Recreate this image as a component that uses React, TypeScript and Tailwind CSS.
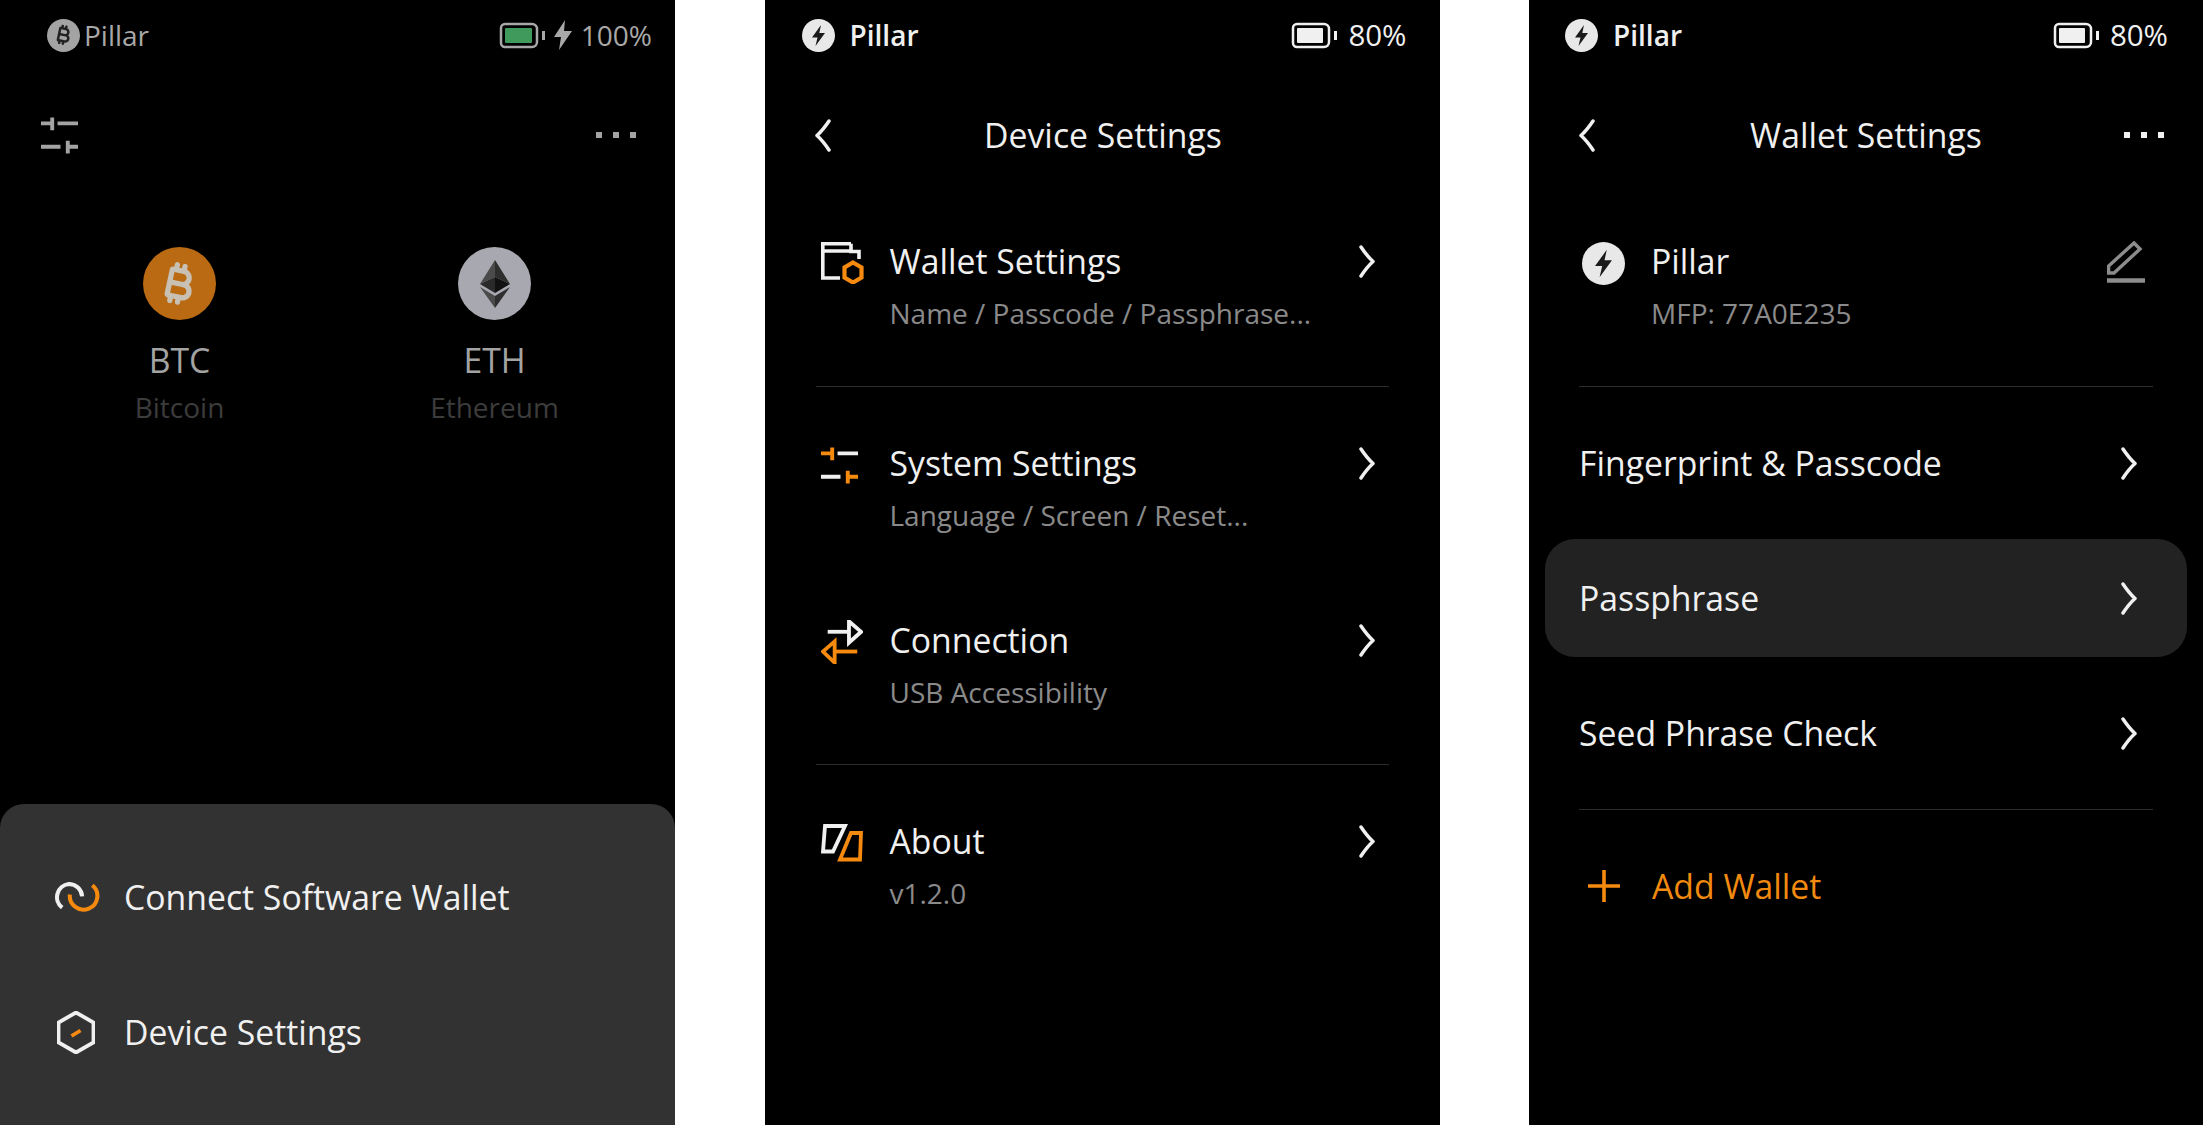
import type { FC, ReactNode } from 'react';
import { FaBitcoinSign } from 'react-icons/fa6';

const ORANGE = '#f68a0e';

const Battery: FC<{ stroke: string; fill: string; fillWidth: number }> = ({ stroke, fill, fillWidth }) => (
  <svg width="47" height="27" viewBox="0 0 47 27" fill="none">
    <path d="M6 2h27a5 5 0 0 1 5 5v13a5 5 0 0 1-5 5H6a4 4 0 0 1-4-4V6a4 4 0 0 1 4-4z" stroke={stroke} strokeWidth="2.5" />
    <rect x="6" y="6" width={fillWidth} height="15" rx="1" fill={fill} />
    <rect x="43" y="9" width="3" height="9" fill={stroke} />
  </svg>
);

const Bolt: FC<{ size: number }> = ({ size }) => (
  <svg width={size} height={size} viewBox="0 0 33 33">
    <circle cx="16.5" cy="16.5" r="16.5" fill="#e8e8e8" />
    <path d="M19 6 10 18.5h5.5L13.5 27 23 14h-5.7z" fill="#1a1a1a" />
  </svg>
);

const Chevron: FC = () => (
  <svg width="16" height="33" viewBox="0 0 16 33" fill="none">
    <path d="M2 2c4 6 7 10 12 14.5C9 21 6 25 2 31" stroke="#f0f0f0" strokeWidth="3.5" strokeLinecap="round" strokeLinejoin="round" />
  </svg>
);

const BackChevron: FC = () => (
  <svg width="16" height="33" viewBox="0 0 16 33" fill="none">
    <path d="M14 2C10 8 7 12 2 16.5 7 21 10 25 14 31" stroke="#f0f0f0" strokeWidth="3.5" strokeLinecap="round" strokeLinejoin="round" />
  </svg>
);

const Dots: FC<{ color: string }> = ({ color }) => (
  <div className={`flex gap-[11px] ${color}`}>
    <span className="w-[6px] h-[6px] bg-current" />
    <span className="w-[6px] h-[6px] bg-current" />
    <span className="w-[6px] h-[6px] bg-current" />
  </div>
);

const SlidersIcon: FC<{ a: string; b: string }> = ({ a, b }) => (
  <svg width="37" height="37" viewBox="0 0 38 37" fill="none" strokeWidth="4">
    <path d="M0 6h13M11.5 0v13" stroke={a} />
    <path d="M17 6h21M0 30h20" stroke={b} />
    <path d="M27 30h11M27.5 24v13" stroke={a} />
  </svg>
);

const WalletIcon: FC = () => (
  <svg width="44" height="42" viewBox="0 0 44 42" fill="none" strokeWidth="3.6">
    <path d="M2 9h28M30 1.8H1.8V36H19M30 1.8V9.5h8V17" stroke="#f0f0f0" />
    <path d="M32 20.5l8.5 5v10l-8.5 5-8.5-5v-10z" stroke={ORANGE} strokeWidth="4.2" />
  </svg>
);

const ConnectionIcon: FC = () => (
  <svg width="42" height="44" viewBox="-2 -1 44 46" fill="none" strokeWidth="4">
    <path d="M5 11.3h22" stroke="#f0f0f0" />
    <path d="M27.3.3 40 11.3 27.3 22.7z" stroke="#f0f0f0" />
    <path d="M36 32H13" stroke={ORANGE} />
    <path d="M12.3 21.3 0 32l12.3 11.7z" stroke={ORANGE} />
  </svg>
);

const AboutIcon: FC = () => (
  <svg width="43" height="38" viewBox="0 0 43 38" fill="none" strokeWidth="3.8">
    <path d="M4 2h20L12 27.5H2z" stroke="#f0f0f0" />
    <path d="M30 9h10l-1 26.5H19z" stroke={ORANGE} />
  </svg>
);

const ConnectIcon: FC = () => (
  <svg width="47" height="31" viewBox="0 0 46 30" fill="none" strokeWidth="4">
    <path d="M9 25A13 13 0 0 1 15.5 1.8 13 13 0 0 1 28.5 14" stroke="#f0f0f0" />
    <path d="M16.5 12A13.5 13.5 0 1 0 38.5 3" stroke={ORANGE} />
  </svg>
);

const DeviceIcon: FC = () => (
  <svg width="38" height="43" viewBox="0 0 38 43" fill="none">
    <path d="M19 1.5l17.5 10v20L19 41.5l-17.5-10v-20z" stroke="#f0f0f0" strokeWidth="3.8" />
    <path d="M14.5 25 23.5 19.5" stroke={ORANGE} strokeWidth="3.8" />
  </svg>
);

const PenIcon: FC = () => (
  <svg width="38" height="42" viewBox="0 0 38 42" fill="none" stroke="#8c8c8c">
    <path d="M27 2l6 6L7 32H1.6v-7z" strokeWidth="3.4" />
    <path d="M0 39.5h38" strokeWidth="4.5" />
  </svg>
);

const StatusBar: FC<{ level: string; pl: string; pr: string }> = ({ level, pl, pr }) => (
  <div className={`h-[70px] flex items-center justify-between ${pl} ${pr}`}>
    <div className="flex items-center gap-[15px]">
      <Bolt size={33} />
      <span className="text-[28px] font-semibold text-[#f0f0f0]">Pillar</span>
    </div>
    <div className="flex items-center gap-[10px]">
      <Battery stroke="#f0f0f0" fill="#f0f0f0" fillWidth={26} />
      <span className="text-[29.5px] text-[#f0f0f0]">{level}</span>
    </div>
  </div>
);

const SettingRow: FC<{ icon: ReactNode; title: string; sub: string }> = ({ icon, title, sub }) => (
  <div className="flex items-start pl-[56px] pr-[65px]">
    <div className="w-[69px] h-[52px] flex items-center shrink-0">{icon}</div>
    <div className="flex-1">
      <div className="text-[33.75px] leading-[48px] text-[#f0f0f0]">{title}</div>
      <div className="mt-[7px] text-[28px] leading-[42px] text-[#8a8a8a]">{sub}</div>
    </div>
    <div className="h-[48px] flex items-center"><Chevron /></div>
  </div>
);

const MenuRow: FC<{ title: string; active?: boolean }> = ({ title, active }) => (
  <div className={`mx-[16px] h-[118px] px-[34px] pr-[50px] flex items-center justify-between rounded-[30px] ${active ? 'bg-[#222222]' : ''}`}>
    <span className="text-[33.75px] text-[#f0f0f0]">{title}</span>
    <Chevron />
  </div>
);

const HomeScreen: FC = () => (
  <div className="w-[675px] h-full bg-black flex flex-col overflow-hidden">
    <div className="h-[70px] flex items-center justify-between pl-[47px] pr-[23px]">
      <div className="flex items-center gap-[4px]">
        <div className="w-[33px] h-[33px] rounded-full bg-[#a3a3a3] flex items-center justify-center">
          <FaBitcoinSign className="w-[14px] h-[20px] rotate-12 text-[#222222]" />
        </div>
        <span className="text-[28px] text-[#a8a8a8]">Pillar</span>
      </div>
      <div className="flex items-center">
        <Battery stroke="#a8a8a8" fill="#3f9a5c" fillWidth={27} />
        <svg className="ml-[8px]" width="18" height="30" viewBox="0 0 18 30">
          <path d="M11 0 0 17h7L5 30 18 11h-8z" fill="#a8a8a8" />
        </svg>
        <span className="ml-[9px] text-[28px] text-[#a8a8a8]">100%</span>
      </div>
    </div>
    <div className="h-[130px] flex items-center justify-between pl-[41px] pr-[39px]">
      <SlidersIcon a="#a3a3a3" b="#a3a3a3" />
      <Dots color="text-[#a3a3a3]" />
    </div>
    <div className="mt-[47px] pl-[22px] grid grid-cols-[315px_315px]">
      <div className="flex flex-col items-center">
        <div className="w-[73px] h-[73px] rounded-full bg-[#b96a12] flex items-center justify-center">
          <FaBitcoinSign className="w-[28px] h-[42px] rotate-12 text-[#c9c0b4]" />
        </div>
        <div className="mt-[16px] text-[33.75px] leading-[48px] text-[#a3a3a3]">BTC</div>
        <div className="mt-[2px] text-[28px] leading-[42px] text-[#3c3c3c]">Bitcoin</div>
      </div>
      <div className="flex flex-col items-center">
        <div className="w-[73px] h-[73px] rounded-full bg-[#a8a8b0] flex items-center justify-center">
          <svg width="30" height="48" viewBox="0 0 30 48">
            <path d="M15 0 0 24l15-7z" fill="#4a4a4a" />
            <path d="M15 0l15 24-15-7z" fill="#2e2e2e" />
            <path d="M0 24l15-7v16z" fill="#2a2a2a" />
            <path d="M30 24l-15-7v16z" fill="#111111" />
            <path d="M0 27l15 21V36z" fill="#4a4a4a" />
            <path d="M30 27 15 48V36z" fill="#2e2e2e" />
          </svg>
        </div>
        <div className="mt-[16px] text-[33.75px] leading-[48px] text-[#a3a3a3]">ETH</div>
        <div className="mt-[2px] text-[28px] leading-[42px] text-[#3c3c3c]">Ethereum</div>
      </div>
    </div>
    <div className="mt-auto h-[321px] pt-[26px] bg-[#323232] rounded-t-[24px]">
      <div className="h-[135px] flex items-center pl-[53px]">
        <div className="w-[71px] shrink-0"><ConnectIcon /></div>
        <span className="text-[33.75px] text-[#f0f0f0]">Connect Software Wallet</span>
      </div>
      <div className="h-[135px] flex items-center pl-[57px]">
        <div className="w-[67px] shrink-0"><DeviceIcon /></div>
        <span className="text-[33.75px] text-[#f0f0f0]">Device Settings</span>
      </div>
    </div>
  </div>
);

const DeviceSettingsScreen: FC = () => (
  <div className="w-[675px] h-full bg-black flex flex-col overflow-hidden">
    <StatusBar level="80%" pl="pl-[37px]" pr="pr-[33px]" />
    <div className="h-[130px] relative flex items-center justify-center pl-[2px]">
      <div className="absolute left-[50px] top-[49px]"><BackChevron /></div>
      <span className="text-[33.75px] text-[#f0f0f0]">Device Settings</span>
    </div>
    <div className="pt-[37px] pb-[52px]">
      <SettingRow icon={<WalletIcon />} title="Wallet Settings" sub="Name / Passcode / Passphrase..." />
    </div>
    <div className="mx-[51px] h-px bg-[#2c2c2c]" />
    <div className="pt-[52px] pb-[51px] flex flex-col gap-[80px]">
      <SettingRow icon={<SlidersIcon a={ORANGE} b="#f0f0f0" />} title="System Settings" sub="Language / Screen / Reset..." />
      <SettingRow icon={<ConnectionIcon />} title="Connection" sub="USB Accessibility" />
    </div>
    <div className="mx-[51px] h-px bg-[#2c2c2c]" />
    <div className="pt-[52px]">
      <SettingRow icon={<AboutIcon />} title="About" sub="v1.2.0" />
    </div>
  </div>
);

const WalletSettingsScreen: FC = () => (
  <div className="w-[674px] h-full bg-black flex flex-col overflow-hidden">
    <StatusBar level="80%" pl="pl-[36px]" pr="pr-[35px]" />
    <div className="h-[130px] relative flex items-center justify-center">
      <div className="absolute left-[50px] top-[49px]"><BackChevron /></div>
      <span className="text-[33.75px] text-[#f0f0f0]">Wallet Settings</span>
      <div className="absolute right-[39px] top-[62px]"><Dots color="text-[#f0f0f0]" /></div>
    </div>
    <div className="pt-[37px] pb-[52px] pl-[53px] pr-[58px] flex items-start">
      <div className="w-[69px] h-[52px] flex items-center shrink-0"><Bolt size={43} /></div>
      <div className="flex-1">
        <div className="text-[33.75px] leading-[48px] text-[#f0f0f0]">Pillar</div>
        <div className="mt-[7px] text-[28px] leading-[42px] text-[#8a8a8a]">MFP: 77A0E235</div>
      </div>
      <div className="mt-[4px]"><PenIcon /></div>
    </div>
    <div className="mx-[50px] h-px bg-[#2c2c2c]" />
    <div className="py-[17px] flex flex-col gap-[17px]">
      <MenuRow title="Fingerprint & Passcode" />
      <MenuRow title="Passphrase" active />
      <MenuRow title="Seed Phrase Check" />
    </div>
    <div className="mx-[50px] h-px bg-[#2c2c2c]" />
    <div className="mt-[52px] pl-[59px] h-[48px] flex items-center">
      <svg className="shrink-0" width="32" height="32" viewBox="0 0 32 32" stroke={ORANGE} strokeWidth="3.6">
        <path d="M0 16h32M16 0v32" />
      </svg>
      <span className="ml-[32px] text-[33.75px] text-[#f28a10]">Add Wallet</span>
    </div>
  </div>
);

const App: FC = () => {
  return (
    <div className="w-[2203px] h-[1125px] bg-white flex justify-between font-['Open_Sans',sans-serif] overflow-hidden">
      <HomeScreen />
      <DeviceSettingsScreen />
      <WalletSettingsScreen />
    </div>
  );
};

export default App;
